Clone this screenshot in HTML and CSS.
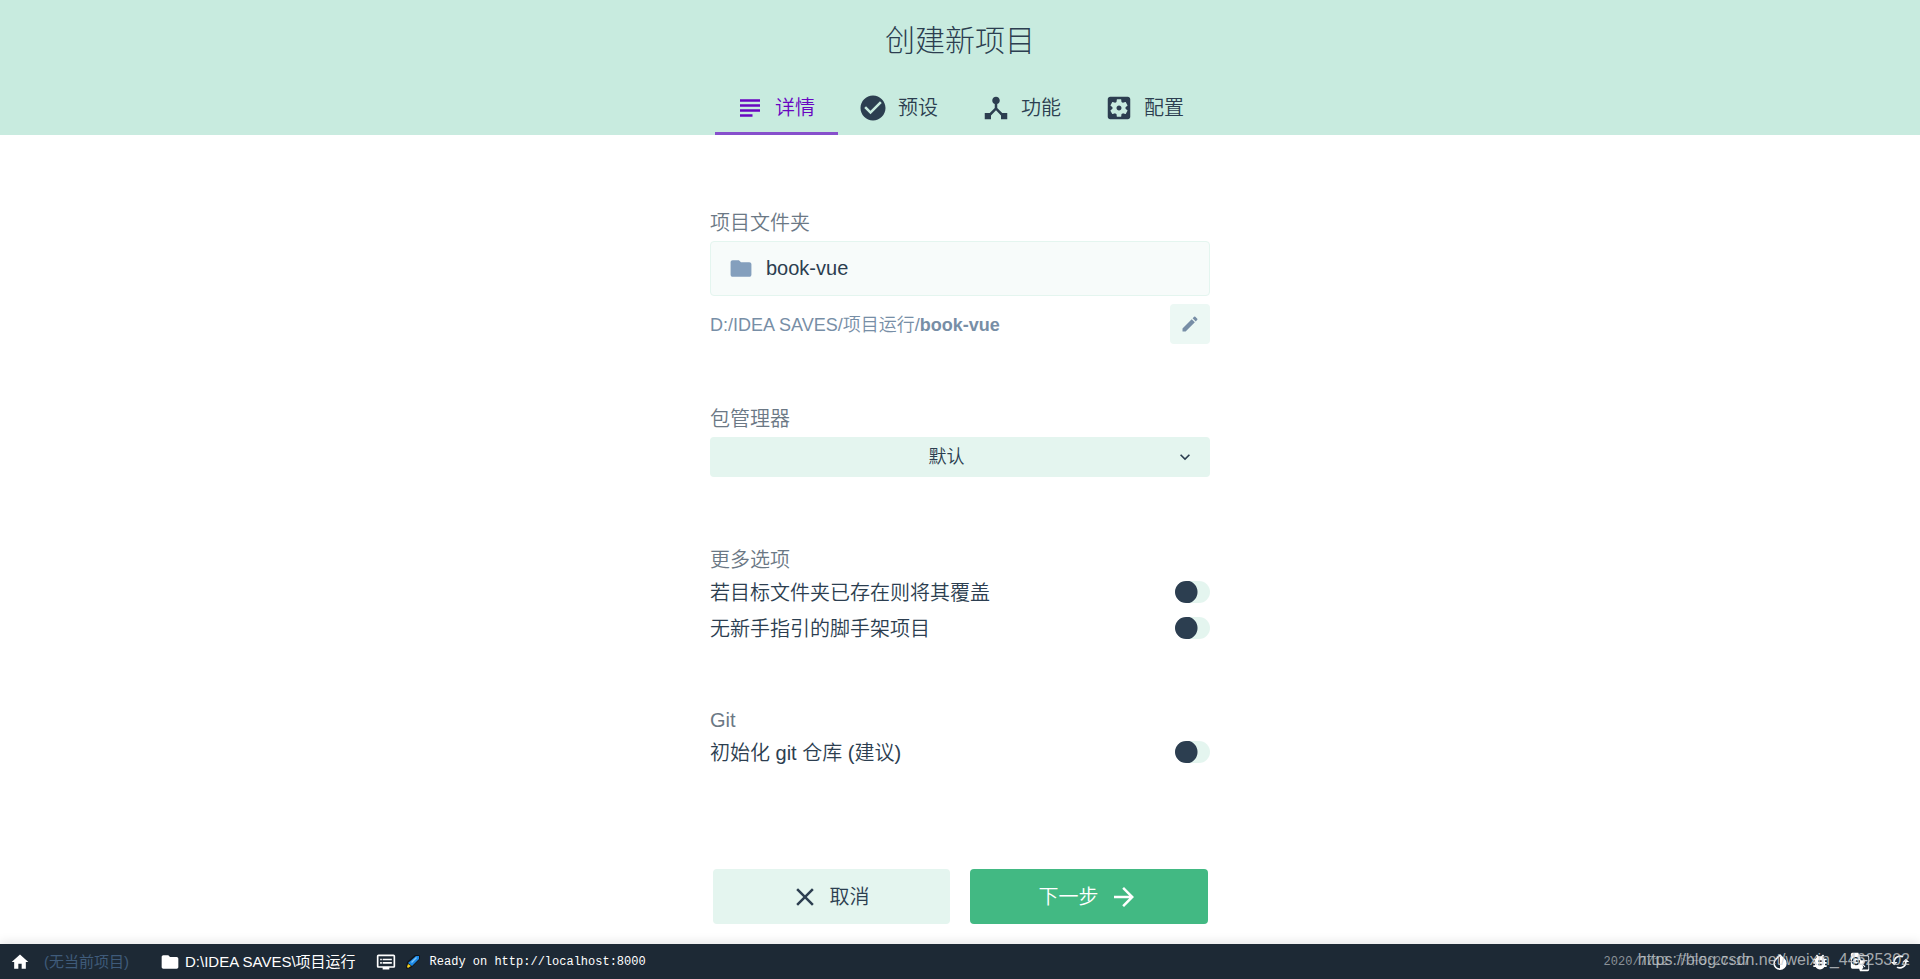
FILE: index.html
```html
<!DOCTYPE html>
<html lang="zh-CN">
<head>
<meta charset="utf-8">
<title>创建新项目</title>
<link rel="stylesheet" href="styles.css">
</head>
<body>
<header class="header">
  <h1 class="title">创建新项目</h1>
  <nav class="tabs">
    <button class="tab tab-active" type="button"><svg class="icon-lg" viewBox="0 0 24 24"><path d="M14 17H4v2h10v-2zm6-8H4v2h16V9zM4 15h16v-2H4v2zM4 5v2h16V5H4z"/></svg>详情</button>
    <button class="tab" type="button"><svg class="icon-lg" viewBox="0 0 24 24"><path d="M12 2C6.480 2 2 6.480 2 12s4.480 10 10 10 10-4.480 10-10S17.520 2 12 2zm-2 15l-5-5 1.410-1.410L10 14.170l7.590-7.590L19 8l-9 9z"/></svg>预设</button>
    <button class="tab" type="button"><svg class="icon-lg" viewBox="0 0 24 24"><path d="M17 16l-4-4V8.820C14.160 8.400 15 7.300 15 6c0-1.660-1.340-3-3-3S9 4.340 9 6c0 1.300.84 2.400 2 2.820V12l-4 4H3v5h5v-3.050l4-4.200 4 4.200V21h5v-5h-4z"/></svg>功能</button>
    <button class="tab" type="button"><svg class="icon-lg" viewBox="0 0 24 24"><path d="M12 10c-1.100 0-2 .9-2 2s.9 2 2 2 2-.9 2-2-.9-2-2-2zm7-7H5c-1.110 0-2 .9-2 2v14c0 1.100.89 2 2 2h14c1.110 0 2-.9 2-2V5c0-1.100-.89-2-2-2zm-1.750 9c0 .23-.02.46-.05.68l1.480 1.160c.13.11.17.3.08.45l-1.400 2.420c-.09.15-.27.21-.43.15l-1.740-.7c-.36.28-.76.51-1.180.69l-.26 1.850c-.03.17-.18.3-.35.3h-2.800c-.17 0-.32-.13-.35-.29l-.26-1.850c-.43-.18-.82-.41-1.180-.69l-1.740.7c-.16.06-.34 0-.43-.15l-1.400-2.420c-.09-.15-.05-.34.08-.45l1.480-1.160c-.03-.23-.05-.46-.05-.69 0-.23.02-.46.05-.68l-1.480-1.160c-.13-.11-.17-.3-.08-.45l1.400-2.420c.09-.15.27-.21.43-.15l1.740.7c.36-.28.76-.51 1.180-.69l.26-1.850c.03-.17.18-.3.35-.3h2.800c.17 0 .32.13.35.29l.26 1.850c.43.18.82.41 1.180.69l1.740-.7c.16-.06.34 0 .43.15l1.400 2.420c.09.15.05.34-.08.45l-1.480 1.160c.03.23.05.46.05.69z"/></svg>配置</button>
  </nav>
</header>

<main class="content">
  <form class="form">
    <section class="field">
      <label class="label" for="folder">项目文件夹</label>
      <div class="input-box">
        <svg class="icon-lg folder" viewBox="0 0 24 24"><path d="M10 4H4c-1.100 0-1.990.9-1.990 2L2 18c0 1.100.9 2 2 2h16c1.100 0 2-.9 2-2V8c0-1.100-.9-2-2-2h-8l-2-2z"/></svg>
        <input class="input" id="folder" type="text" value="book-vue">
      </div>
      <div class="path-row">
        <span class="path">D:/IDEA SAVES/项目运行/<b class="path-name">book-vue</b></span>
        <button class="edit" type="button" aria-label="编辑"><svg class="icon-md" viewBox="0 0 24 24"><path d="M3 17.250V21h3.750L17.810 9.940l-3.750-3.750L3 17.250zM20.710 7.040a1 1 0 0 0 0-1.410l-2.340-2.340a1 1 0 0 0-1.410 0l-1.830 1.830 3.750 3.750 1.830-1.830z"/></svg></button>
      </div>
    </section>

    <section class="field">
      <label class="label" for="manager">包管理器</label>
      <div class="select-box">
        <select class="select" id="manager"><option>默认</option></select>
        <svg class="icon-md chevron" viewBox="0 0 24 24"><path d="M7.410 8.590L12 13.170l4.590-4.580L18 10l-6 6-6-6z"/></svg>
      </div>
    </section>

    <section class="field options">
      <h2 class="label">更多选项</h2>
      <label class="switch-row"><span class="switch-text">若目标文件夹已存在则将其覆盖</span><input class="switch" type="checkbox" role="switch"></label>
      <label class="switch-row"><span class="switch-text">无新手指引的脚手架项目</span><input class="switch" type="checkbox" role="switch"></label>
    </section>

    <section class="field">
      <h2 class="label">Git</h2>
      <label class="switch-row"><span class="switch-text">初始化 git 仓库 (建议)</span><input class="switch" type="checkbox" role="switch"></label>
    </section>
  </form>
</main>

<div class="actions">
  <button class="btn" type="button"><svg class="icon-lg" viewBox="0 0 24 24"><path d="M19 6.410L17.590 5 12 10.590 6.410 5 5 6.410 10.590 12 5 17.590 6.410 19 12 13.410 17.590 19 19 17.590 13.410 12z"/></svg>取消</button>
  <button class="btn btn-primary" type="button">下一步<svg class="icon-lg" viewBox="0 0 24 24"><path d="M12 4l-1.410 1.410L16.170 11H4v2h12.170l-5.580 5.590L12 20l8-8z"/></svg></button>
</div>

<footer class="status">
  <button class="status-btn" type="button" aria-label="主页"><svg class="icon-md" viewBox="0 0 24 24"><path d="M10 20v-6h4v6h5v-8h3L12 3 2 12h3v8z"/></svg></button>
  <span class="no-project">(无当前项目)</span>
  <span class="cwd"><svg class="icon-md" viewBox="0 0 24 24"><path d="M10 4H4c-1.100 0-1.990.9-1.990 2L2 18c0 1.100.9 2 2 2h16c1.100 0 2-.9 2-2V8c0-1.100-.9-2-2-2h-8l-2-2z"/></svg>D:\IDEA SAVES\项目运行</span>
  <span class="log">
    <svg class="icon-md" viewBox="0 0 24 24"><path d="M21 3H3c-1.100 0-2 .9-2 2v12c0 1.100.9 2 2 2h5v2h8v-2h5c1.100 0 2-.9 2-2V5c0-1.100-.9-2-2-2zm0 14H3V5h18v12zm-2-9H8v2h11V8zm0 4H8v2h11v-2zM7 8H5v2h2V8zm0 4H5v2h2v-2z"/></svg>
    <svg class="rocket" viewBox="0 0 14 14"><path fill="#10141a" d="M9 0h4l1 1v3L5 13l-4 1-1-1 1-6z"/><path fill="#1d8ae8" d="M10 1h3v3l-7 7-4-3z"/><path fill="#7ec4f5" d="M10 2l1 1-5 5-1-1z"/><path fill="#f5d21c" d="M2 9l3 2-3 2-1-1z"/></svg>
    <span>Ready on http://localhost:8000</span>
  </span>
  <span class="date">2020/7/12 下午5:27:17</span>
  <span class="tools">
    <button class="status-btn" type="button" aria-label="主题"><svg class="icon-md" viewBox="0 0 24 24"><path fill-rule="evenodd" d="M17.660 8L12 2.350 6.340 8a8 8 0 1 0 11.320 0zM12 19.600a5.900 5.900 0 0 1-4.240-10.200L12 5.200z"/></svg></button>
    <button class="status-btn" type="button" aria-label="报告问题"><svg class="icon-md" viewBox="0 0 24 24"><path d="M20 8h-2.810c-.45-.78-1.070-1.450-1.820-1.960L17 4.410 15.590 3l-2.170 2.170a6 6 0 0 0-2.840 0L8.410 3 7 4.410l1.620 1.630C7.880 6.550 7.260 7.220 6.810 8H4v2h2.090c-.05.33-.09.66-.09 1v1H4v2h2v1c0 .34.04.67.09 1H4v2h2.810a6 6 0 0 0 10.380 0H20v-2h-2.090c.05-.33.09-.66.09-1v-1h2v-2h-2v-1c0-.34-.04-.67-.09-1H20V8zm-6 8h-4v-2h4v2zm0-4h-4v-2h4v2z"/></svg></button>
    <button class="status-btn" type="button" aria-label="翻译"><svg class="icon-md" viewBox="0 0 24 24"><path fill-rule="evenodd" d="M21 4H11l-1-3H3a2 2 0 0 0-2 2v15a2 2 0 0 0 2 2h8l1 3h9a2 2 0 0 0 2-2V6a2 2 0 0 0-2-2zM7 16a5 5 0 1 1 3.300-8.700L9 8.600A3 3 0 1 0 9.800 12H7v-2h4.900A5 5 0 0 1 7 16zM22 20a1 1 0 0 1-1 1h-7l2-2-1-3.500 2.700 2.700.8-.8-2.700-2.700c1-1 1.700-2.300 2-3.700H21v-1h-4V9h-1v1h-3l-1.600-5H21a1 1 0 0 1 1 1z"/></svg></button>
    <button class="status-btn" type="button" aria-label="刷新"><svg class="icon-md" viewBox="0 0 24 24"><path d="M19 8l-4 4h3a6 6 0 0 1-8.800 5.300l-1.460 1.460A8 8 0 0 0 20 12h3l-4-4zM6 12a6 6 0 0 1 8.800-5.300l1.460-1.460A8 8 0 0 0 4 12H1l4 4 4-4H6z"/></svg></button>
  </span>
  <span class="watermark">https://blog.csdn.net/weixin_44625302</span>
</footer>
</body>
</html>
```

FILE: styles.css
```css
* { box-sizing: border-box; }

body {
  margin: 0;
  min-height: 100vh;
  display: flex;
  flex-direction: column;
  background: #fff;
  color: #2c3e50;
  font: 350 20px/28px "Liberation Sans", "Noto Sans CJK SC", sans-serif;
}

button, input, select { font: inherit; color: inherit; }
button { border: 0; background: none; padding: 0; cursor: pointer; }
svg { fill: currentColor; flex: none; display: block; }
.icon-lg { width: 30px; height: 30px; }
.icon-md { width: 20px; height: 20px; }

.header { background: #c8ebdf; text-align: center; }
.title { margin: 0; padding: 20px 0; font-size: 30px; font-weight: 300; line-height: 42px; }
.tabs { display: flex; justify-content: center; padding-left: 2px; }
.tab {
  display: flex;
  align-items: center;
  gap: 10px;
  height: 53px;
  padding: 2px 23px 0 20px;
  border-bottom: 3px solid transparent;
}
.tab-active { color: #6806c1; border-color: #8750cc; }

.content { flex: 1; }
.form { width: 500px; max-width: 100%; margin: 0 auto; padding-top: 74px; }
.field { margin-bottom: 61px; }
.label { display: block; margin: 0 0 4px; font-size: 20px; font-weight: inherit; color: #6b7885; }
.input-box {
  display: flex;
  align-items: center;
  gap: 10px;
  height: 55px;
  padding: 0 15px;
  border: 1px solid #e4f5ef;
  border-radius: 4px;
  background: #f7fbfa;
}
.folder { width: 30px; height: 25px; color: #849fbd; }
.input { flex: 1; min-width: 0; border: 0; padding: 0 0 2px; background: none; outline: 0; }
.path-row { display: flex; align-items: center; justify-content: space-between; margin-top: 8px; font-size: 18px; color: #778ea6; }
.path { padding-top: 2px; }
.path-name { font-weight: 700; }
.edit { display: flex; align-items: center; justify-content: center; width: 40px; height: 40px; border-radius: 4px; background: #ecf8f4; }

.select-box { display: grid; align-items: center; }
.select {
  grid-area: 1 / 1;
  width: 100%;
  height: 40px;
  padding: 0 30px 0 3px;
  border: 0;
  border-radius: 4px;
  appearance: none;
  background: #e4f5ef;
  font-size: 18px;
  text-align: center;
  text-align-last: center;
}
.chevron { grid-area: 1 / 1; justify-self: end; margin-right: 15px; pointer-events: none; }

.field + .options { margin: 69px 0 60px; }
.options .label, .field:last-child .label { margin-bottom: 0; }
.switch-row { display: flex; align-items: center; justify-content: space-between; height: 36px; }
.switch-text { padding-top: 2px; }
.switch {
  appearance: none;
  width: 35px;
  height: 22px;
  margin: 0;
  border-radius: 11px;
  background: radial-gradient(circle at 11px 11px, #2c3e50 11px, #e4f5ef 12px);
}

.actions { display: flex; justify-content: center; gap: 20px; padding: 20px 0; }
.btn { display: flex; align-items: center; justify-content: center; gap: 10px; width: 237px; height: 55px; padding-right: 3px; border-radius: 4px; background: #e4f5ef; }
.btn-primary { width: 238px; padding: 0; background: #42b983; color: #fff; }

.status {
  position: relative;
  display: flex;
  align-items: center;
  height: 35px;
  padding: 0 10px;
  background: #1d2935;
  color: #fff;
  font-size: 15px;
  font-weight: 400;
  line-height: 24px;
  box-shadow: 0 -2px 10px rgba(0, 0, 0, 0.1);
}
.status-btn { display: flex; }
.no-project { margin-left: 14px; color: #3f5b7a; }
.cwd { display: flex; align-items: center; gap: 5px; margin-left: 31px; }
.log { display: flex; align-items: center; gap: 10px; margin-left: 20px; font-family: "Liberation Mono", "Noto Sans CJK SC", monospace; font-size: 12px; }
.rocket { width: 14px; height: 14px; }
.date { margin-left: auto; color: #8a9198; font: 300 12px/24px "Liberation Mono", "Noto Sans CJK SC", monospace; }
.tools { display: flex; gap: 20px; margin-left: 20px; }
.watermark { position: absolute; right: 10px; top: 4px; color: rgba(200, 203, 206, 0.8); font-size: 16px; }
```
